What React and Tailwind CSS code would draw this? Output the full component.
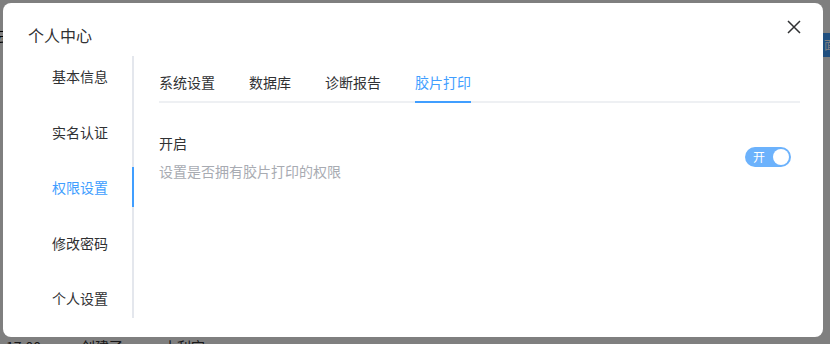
import React from "react";

const font = { fontFamily: '"Noto Sans CJK SC", "Noto Sans", sans-serif' };

export default function App() {
  const menu = ["基本信息", "实名认证", "权限设置", "修改密码", "个人设置"];
  const tabs = ["系统设置", "数据库", "诊断报告", "胶片打印"];
  return (
    <div className="relative w-[830px] h-[344px] overflow-hidden bg-white" style={font}>
      {/* underlying page */}
      <div className="absolute left-[-6px] top-[26px] text-[14px] text-black">云</div>
      <div className="absolute left-[823px] top-[33px] w-[20px] h-[24px] bg-[#409eff] text-white text-[12px] leading-[24px] pl-[1px]">面</div>
      <div className="absolute left-[6px] top-[336px] flex gap-[40px] text-[14px] text-[#303133]">
        <span>17:00</span>
        <span>创建了</span>
        <span>小利宝</span>
      </div>
      {/* overlay */}
      <div className="absolute inset-0 bg-black/50" />
      {/* dialog */}
      <div className="absolute left-[3px] top-[3px] w-[820px] h-[334px] bg-white rounded-[8px] flex flex-col">
        <div className="flex items-center justify-between pl-[25px] pr-[20px] pt-[20px] h-[44px]">
          <span className="text-[16px] leading-[24px] text-[#303133]">个人中心</span>
          <svg width="16" height="16" viewBox="0 0 16 16" className="mt-[-16px] mr-[1px]">
            <path d="M2 2 L14 14 M14 2 L2 14" stroke="#303133" strokeWidth="1.5" fill="none" />
          </svg>
        </div>
        <div className="flex pt-[9px]">
          <div className="w-[131px] border-r-2 border-[#e4e7ed] flex flex-col gap-[15.5px]">
            {menu.map((m) => (
              <div
                key={m}
                className={`relative h-10 leading-10 text-right pr-[24px] text-[14px] ${
                  m === "权限设置" ? "text-[#409eff]" : "text-[#303133]"
                }`}
              >
                {m}
                {m === "权限设置" && (
                  <div className="absolute right-[-2px] top-0 w-[2px] h-10 bg-[#409eff]" />
                )}
              </div>
            ))}
          </div>
          <div className="flex-1 pl-[25px] pr-[23px]">
            <div className="flex gap-[34px] border-b-2 border-[#eef0f3] h-[41px] mt-[6px]">
              {tabs.map((t) => (
                <div
                  key={t}
                  className={`relative h-[39px] leading-[40px] text-[14px] ${
                    t === "胶片打印" ? "text-[#409eff]" : "text-[#303133]"
                  }`}
                >
                  {t}
                  {t === "胶片打印" && (
                    <div className="absolute left-0 right-0 bottom-[-2px] h-[2px] bg-[#409eff]" />
                  )}
                </div>
              ))}
            </div>
            <div className="flex items-center justify-between pt-[29px]">
              <div className="flex flex-col">
                <span className="text-[14px] leading-[22px] text-[#303133]">开启</span>
                <span className="text-[14px] leading-[22px] mt-[6px] text-[#a8abb2]">设置是否拥有胶片打印的权限</span>
              </div>
              <div className="w-[46px] h-[20px] rounded-full bg-[#6cb2fc] flex items-center justify-between pl-[8px] pr-[2px] mr-[9px]">
                <span className="text-[12px] leading-[20px] text-white">开</span>
                <span className="w-[16px] h-[16px] rounded-full bg-white" />
              </div>
            </div>
          </div>
        </div>
      </div>
    </div>
  );
}
